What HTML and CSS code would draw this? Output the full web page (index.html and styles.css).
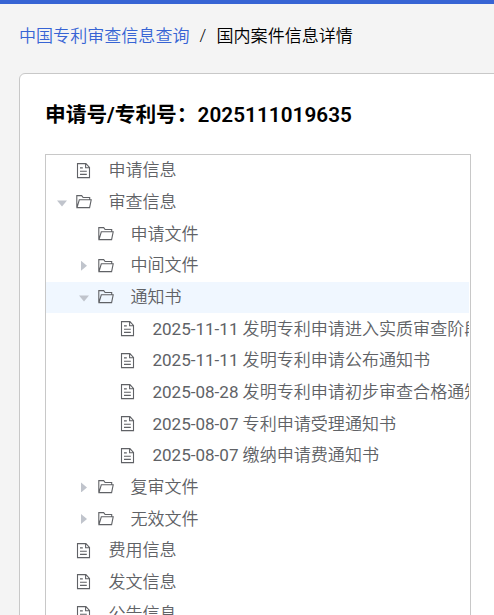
FILE: index.html
```
<!DOCTYPE html>
<html lang="zh-CN">
<head>
    <meta charset="UTF-8">
    <meta name="viewport" content="width=device-width, initial-scale=1.0">
    <title>国内案件信息详情</title>
    <link rel="stylesheet" href="styles.css">
</head>
<body>
    <svg class="sprite">
        <symbol id="icon-file" viewBox="0 0 16 16">
            <path d="M1.5 .6h8.4l3.6 3.8v10.2H1.5z M9.6 .8v4h3.6 M4 4.9h2.8 M4 8.2h6.8 M4 11.4h6.8"/>
        </symbol>
        <symbol id="icon-folder" viewBox="0 0 16 16">
            <path d="M.8 13.6V1.6h4.9l1.4 1.9h6.6v2.3 M1 13.6l2.3-7.8h11.9l-1.6 7.8z"/>
        </symbol>
    </svg>
    <nav class="breadcrumb">
        <a href="#">中国专利审查信息查询</a>
        <span class="separator">/</span>
        <span>国内案件信息详情</span>
    </nav>
    <main class="card">
        <h1>申请号/专利号：<span class="number">2025111019635</span></h1>
        <ul class="tree">
            <li class="node"><i class="caret"></i><svg class="icon"><use href="#icon-file"/></svg><span class="label">申请信息</span></li>
            <li class="node"><i class="caret open"></i><svg class="icon"><use href="#icon-folder"/></svg><span class="label">审查信息</span></li>
            <li class="node level-1"><i class="caret"></i><svg class="icon"><use href="#icon-folder"/></svg><span class="label">申请文件</span></li>
            <li class="node level-1"><i class="caret closed"></i><svg class="icon"><use href="#icon-folder"/></svg><span class="label">中间文件</span></li>
            <li class="node level-1 current"><i class="caret open"></i><svg class="icon"><use href="#icon-folder"/></svg><span class="label">通知书</span></li>
            <li class="node level-2"><i class="caret"></i><svg class="icon"><use href="#icon-file"/></svg><span class="label"><span class="date">2025-11-11</span> 发明专利申请进入实质审查阶段通知书</span></li>
            <li class="node level-2"><i class="caret"></i><svg class="icon"><use href="#icon-file"/></svg><span class="label"><span class="date">2025-11-11</span> 发明专利申请公布通知书</span></li>
            <li class="node level-2"><i class="caret"></i><svg class="icon"><use href="#icon-file"/></svg><span class="label"><span class="date">2025-08-28</span> 发明专利申请初步审查合格通知书</span></li>
            <li class="node level-2"><i class="caret"></i><svg class="icon"><use href="#icon-file"/></svg><span class="label"><span class="date">2025-08-07</span> 专利申请受理通知书</span></li>
            <li class="node level-2"><i class="caret"></i><svg class="icon"><use href="#icon-file"/></svg><span class="label"><span class="date">2025-08-07</span> 缴纳申请费通知书</span></li>
            <li class="node level-1"><i class="caret closed"></i><svg class="icon"><use href="#icon-folder"/></svg><span class="label">复审文件</span></li>
            <li class="node level-1"><i class="caret closed"></i><svg class="icon"><use href="#icon-folder"/></svg><span class="label">无效文件</span></li>
            <li class="node"><i class="caret"></i><svg class="icon"><use href="#icon-file"/></svg><span class="label">费用信息</span></li>
            <li class="node"><i class="caret"></i><svg class="icon"><use href="#icon-file"/></svg><span class="label">发文信息</span></li>
            <li class="node"><i class="caret"></i><svg class="icon"><use href="#icon-file"/></svg><span class="label">公告信息</span></li>
        </ul>
    </main>
</body>
</html>
```

FILE: styles.css
```
* {
    box-sizing: border-box;
}
body {
    margin: 0;
    height: 100vh;
    overflow: hidden;
    border-top: 4px solid #3764d4;
    background-color: #f4f4f4;
    font-family: Roboto, "Noto Sans CJK SC", sans-serif;
    font-size: 17.06px;
    font-weight: 350;
    color: #000;
}
.sprite {
    display: none;
}
.breadcrumb {
    display: flex;
    align-items: center;
    height: 69px;
    padding: 0 0 8px 19px;
    white-space: nowrap;
}
.breadcrumb a {
    color: #3764d4;
    text-decoration: none;
}
.separator {
    width: 27px;
    text-align: center;
}
.card {
    height: 700px;
    margin: 0 -20px 0 19px;
    padding: 0 25px;
    border: 1px solid #c8c8c8;
    border-radius: 6px;
    background-color: #fff;
}
h1 {
    margin: 0;
    height: 80px;
    line-height: 82px;
    font-size: 20.7px;
    font-weight: 700;
    white-space: nowrap;
}
.number {
    font-weight: 600;
    letter-spacing: 0.06px;
}
.tree {
    width: 426px;
    height: 560px;
    margin: 0;
    padding: 0 1px 0 0;
    border: 1px solid #c8c8c8;
    list-style: none;
    color: #606266;
}
.node {
    display: flex;
    align-items: center;
    height: 31.67px;
    padding-left: 10px;
    overflow: hidden;
    white-space: nowrap;
}
.level-1 {
    padding-left: 32px;
}
.level-2 {
    padding-left: 54px;
}
.current {
    background-color: #f0f7ff;
}
.caret {
    flex: none;
    width: 20px;
    height: 10px;
    background-color: #c0c4cc;
    clip-path: polygon(0 0, 0 0, 0 0);
}
.caret.open {
    clip-path: polygon(1px 3px, 11px 3px, 6px 9px);
}
.caret.closed {
    clip-path: polygon(3px 0, 9px 5px, 3px 10px);
}
.icon {
    flex: none;
    width: 16px;
    height: 16px;
    margin-right: 16.4px;
    fill: none;
    stroke: #606266;
    stroke-width: 1.1;
}
.label {
    padding-bottom: 4px;
}
.date {
    font-weight: 400;
}
```
